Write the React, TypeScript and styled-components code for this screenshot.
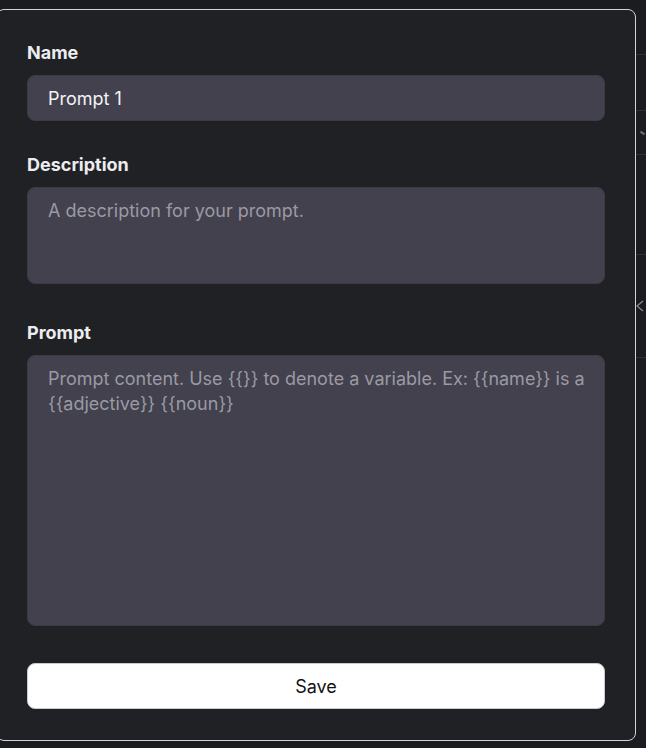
import styled, { createGlobalStyle } from 'styled-components';

const GlobalStyle = createGlobalStyle`
  html, body {
    margin: 0;
    padding: 0;
    background: #1b1c20;
    overflow: hidden;
  }
  * {
    box-sizing: border-box;
  }
`;

// faint rows of the page that sits behind the modal (only a sliver shows)
const BACK_ROWS = [55, 56, 44, 100, 103];

const App = () => {
  return (
    <>
      <GlobalStyle />
      <S.Page>
        <S.Top>
          <S.Modal>
            <S.Form onSubmit={(e) => e.preventDefault()}>
              <S.Field>
                <S.Label htmlFor="name">Name</S.Label>
                <S.Input id="name" defaultValue="Prompt 1" />
              </S.Field>
              <S.Field>
                <S.Label htmlFor="description">Description</S.Label>
                <S.TextArea
                  id="description"
                  $height={97}
                  placeholder="A description for your prompt."
                />
              </S.Field>
              <S.Field>
                <S.Label htmlFor="prompt">Prompt</S.Label>
                <S.TextArea
                  id="prompt"
                  $height={271}
                  placeholder={
                    'Prompt content. Use {{}} to denote a variable. Ex: {{name}} is a\n{{adjective}} {{noun}}'
                  }
                />
              </S.Field>
              <S.SaveButton type="submit">Save</S.SaveButton>
            </S.Form>
          </S.Modal>
          <S.Backdrop>
            {BACK_ROWS.map((h, i) => (
              <S.BackRow key={i} $height={h}>
                {i === 2 && <S.Tick />}
                {i === 4 && (
                  <svg width="8" height="12" viewBox="0 0 8 12">
                    <path d="M7 1 L1 6 L7 11" fill="none" stroke="#8a8b94" strokeWidth="1.2" />
                  </svg>
                )}
              </S.BackRow>
            ))}
          </S.Backdrop>
        </S.Top>
        <S.Footer>Insert a call "{'{{prompt}}'}" into the chat and it will be replaced.</S.Footer>
      </S.Page>
    </>
  );
};
export default App;

const S = {
  Page: styled.div`
    width: 646px;
    height: 748px;
    display: flex;
    flex-direction: column;
    overflow: hidden;
    font-family: Inter, 'Noto Sans', sans-serif;
  `,
  Top: styled.div`
    display: flex;
    align-items: flex-start;
  `,
  Modal: styled.div`
    flex: none;
    width: 640px;
    margin: 9px 0 0 -4px;
    padding: 31px 30px 31px;
    background: #202124;
    border: 1px solid #d2d2da;
    border-radius: 8px;
    position: relative;
    z-index: 1;
  `,
  Form: styled.form`
    display: flex;
    flex-direction: column;
    gap: 32px;
  `,
  Field: styled.div`
    display: flex;
    flex-direction: column;
    gap: 10px;
  `,
  Label: styled.label`
    font-size: 18px;
    line-height: 24px;
    font-weight: 700;
    color: #ececf1;
  `,
  Input: styled.input`
    height: 46px;
    width: 100%;
    padding: 0 20px;
    background: #42414d;
    border: 1px solid #3b3a45;
    border-radius: 8px;
    font-family: Inter, 'Noto Sans', sans-serif;
    font-size: 18px;
    color: #f2f2f5;
    outline: none;
  `,
  TextArea: styled.textarea<{ $height: number }>`
    display: block;
    height: ${({ $height }) => $height}px;
    width: 100%;
    margin-bottom: 5px;
    padding: 10px 14px 10px 20px;
    background: #42414d;
    border: 1px solid #3b3a45;
    border-radius: 8px;
    font-family: Inter, 'Noto Sans', sans-serif;
    font-size: 18px;
    line-height: 25px;
    color: #f2f2f5;
    resize: none;
    outline: none;

    &::placeholder {
      color: #9a9aa4;
    }
  `,
  SaveButton: styled.button`
    height: 46px;
    width: 100%;
    background: #ffffff;
    border: 1px solid #c9c9d0;
    border-radius: 8px;
    font-family: Inter, 'Noto Sans', sans-serif;
    font-size: 18px;
    color: #111114;
    cursor: pointer;
  `,
  Backdrop: styled.div`
    flex: 1;
    display: flex;
    flex-direction: column;
  `,
  BackRow: styled.div<{ $height: number }>`
    height: ${({ $height }) => $height}px;
    border-bottom: 1px dashed #34353c;
    display: flex;
    align-items: center;
  `,
  Tick: styled.span`
    margin-left: auto;
    margin-right: 1px;
    width: 5px;
    height: 2px;
    background: #6b6c74;
    transform: rotate(35deg);
  `,
  Footer: styled.div`
    padding: 3px 0 0 62px;
    font-size: 14px;
    line-height: 20px;
    color: #4a4b52;
    white-space: nowrap;
  `,
};
